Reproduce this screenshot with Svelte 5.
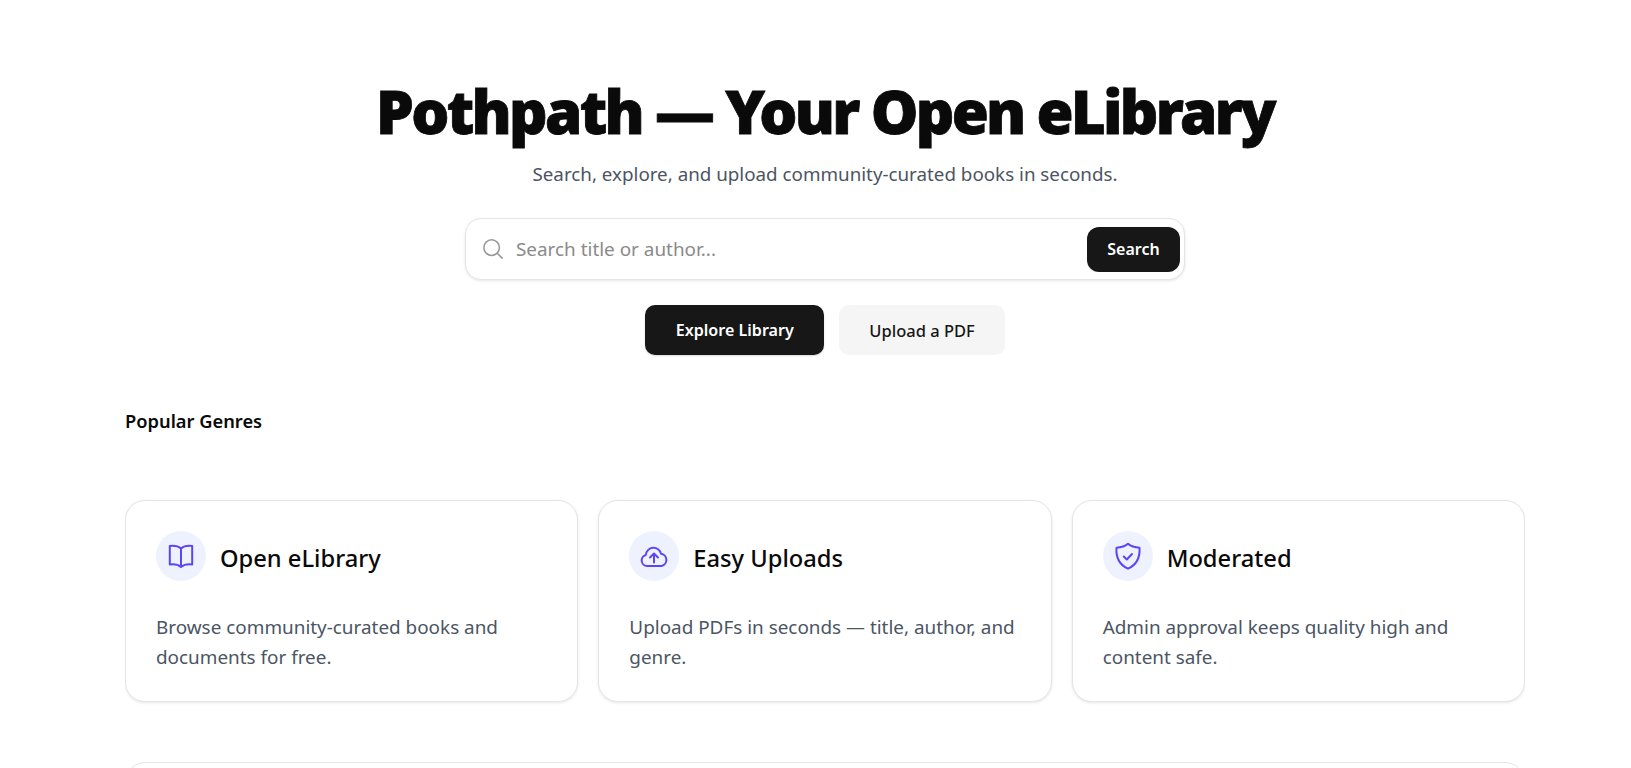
<script>
  const features = [
    { title: 'Open eLibrary', text: 'Browse community-curated books and documents for free.', icon: 'book' },
    { title: 'Easy Uploads', text: 'Upload PDFs in seconds — title, author, and genre.', icon: 'cloud' },
    { title: 'Moderated', text: 'Admin approval keeps quality high and content safe.', icon: 'shield' }
  ];
</script>

<div class="page">
  <section class="hero">
    <h1>Pothpath — Your Open eLibrary</h1>
    <p class="sub">Search, explore, and upload community-curated books in seconds.</p>
    <form class="search" onsubmit={(e) => e.preventDefault()}>
      <svg class="search-icon" viewBox="0 0 24 24" fill="none" stroke="currentColor" stroke-width="1.7" stroke-linecap="round" stroke-linejoin="round">
        <circle cx="10.5" cy="10.5" r="8.5" />
        <path d="m22 22-5.3-5.3" />
      </svg>
      <input type="text" placeholder="Search title or author..." />
      <button class="search-btn" type="submit">Search</button>
    </form>
    <div class="actions">
      <button class="btn primary">Explore Library</button>
      <button class="btn secondary">Upload a PDF</button>
    </div>
  </section>

  <h2 class="genres">Popular Genres</h2>

  <section class="cards">
    {#each features as f}
      <article class="card">
        <header class="card-head">
          <span class="icon-wrap">
            <svg viewBox="0 0 30 30" fill="none" stroke="currentColor" stroke-width="2" stroke-linecap="round" stroke-linejoin="round">
              {#if f.icon === 'book'}
                <path d="M15 7.5C12.5 5.2 8.5 4.5 3.8 5v18.5c4.700-.5 8.700.3 11.200 2.500 2.500-2.200 6.500-3 11.200-2.500V5C21.500 4.500 17.500 5.200 15 7.500Zm0 0V26" />
              {:else if f.icon === 'cloud'}
                <path d="M8 25a5.6 5.6 0 0 1-1.200-11 7.700 7.700 0 0 1 15.200-1.200 6.200 6.200 0 0 1 .5 12.200Z" />
                <path d="M15 21.500V12.500m-4 4 4-4 4 4" />
              {:else}
                <path d="M15 2.800c3 2.600 6.500 3.700 11.500 3.900.6 8-.8 16-11.500 21C4.300 22.700 2.900 14.700 3.500 6.700 8.500 6.500 12 5.400 15 2.800Z" />
                <path d="M10.800 15.500l3 3 5.200-5.500" />
              {/if}
            </svg>
          </span>
          <h3>{f.title}</h3>
        </header>
        <p>{f.text}</p>
      </article>
    {/each}
  </section>

  <section class="next-panel"></section>
</div>

<style>
  :global(html), :global(body) {
    margin: 0;
    background: #fff;
    overflow: hidden;
  }
  :global(*) { box-sizing: border-box; }

  .page {
    width: 1400px;
    margin-left: 125px;
    height: 768px;
    overflow: hidden;
    font-family: "Noto Sans", "Open Sans", sans-serif;
    color: #0a0a0a;
  }
  .hero {
    display: flex;
    flex-direction: column;
    align-items: center;
    padding-top: 73px;
  }
  h1 {
    margin: 0;
    font-size: 60px;
    line-height: 76px;
    font-weight: 900;
    color: #0a0a0a;
    letter-spacing: -2.7px;
    -webkit-text-stroke: 0.8px #0a0a0a;
  }
  .sub {
    margin: 11px 0 0;
    font-size: 18.8px;
    line-height: 28px;
    color: #4b5563;
  }
  .search {
    margin-top: 30px;
    width: 720px;
    height: 62px;
    display: flex;
    align-items: center;
    background: #fff;
    border: 1px solid #e5e5e5;
    border-radius: 16px;
    box-shadow: 0 1px 3px rgba(0,0,0,.1);
    padding: 0 4px 0 16px;
  }
  .search-icon {
    width: 22px;
    height: 22px;
    color: #999;
    flex: none;
  }
  input {
    flex: 1;
    border: 0;
    outline: 0;
    min-width: 0;
    margin-left: 10px;
    font: inherit;
    font-size: 18.9px;
    color: #0a0a0a;
    background: transparent;
  }
  input::placeholder { color: #8a8a8a; opacity: 1; }
  button {
    font: inherit;
    border: 0;
    cursor: pointer;
  }
  .search-btn {
    width: 93px;
    height: 45px;
    background: #171717;
    color: #fff;
    border-radius: 12px;
    font-size: 16px;
    font-weight: 600;
  }
  .actions {
    display: flex;
    gap: 15px;
    margin-top: 25px;
  }
  .btn {
    height: 50px;
    border-radius: 10px;
    font-size: 16.5px;
    font-weight: 500;
    padding: 0 30px;
  }
  .primary {
    background: #171717;
    color: #fff;
    box-shadow: 0 1px 2px rgba(0,0,0,.15);
    font-size: 16.1px;
    font-weight: 600;
    padding: 0 30.5px;
  }
  .secondary { background: #f5f5f5; color: #171717; }
  .genres {
    margin: 52px 0 0;
    font-size: 18.3px;
    line-height: 28px;
    font-weight: 600;
    color: #0a0a0a;
  }
  .cards {
    display: grid;
    grid-template-columns: repeat(3, 1fr);
    gap: 20px;
    margin-top: 65px;
  }
  .card {
    height: 202px;
    border: 1px solid #e5e5e5;
    border-radius: 20px;
    padding: 30px;
    background: #fff;
    box-shadow: 0 1px 3px rgba(0,0,0,.1);
  }
  .card-head {
    display: flex;
    align-items: center;
    gap: 14px;
  }
  .icon-wrap {
    width: 50px;
    height: 50px;
    border-radius: 50%;
    background: #eef2ff;
    color: #5b46f5;
    display: flex;
    align-items: center;
    justify-content: center;
    flex: none;
  }
  .icon-wrap svg { width: 30px; height: 30px; }
  h3 {
    margin: 4px 0 0;
    font-size: 23.7px;
    font-weight: 500;
    line-height: 32px;
    color: #0a0a0a;
  }
  .card p {
    margin: 31px 0 0;
    font-size: 18.9px;
    line-height: 30px;
    color: #4b5563;
  }
  .next-panel {
    margin-top: 60px;
    height: 200px;
    border: 1px solid #e5e5e5;
    border-radius: 20px;
  }
</style>
